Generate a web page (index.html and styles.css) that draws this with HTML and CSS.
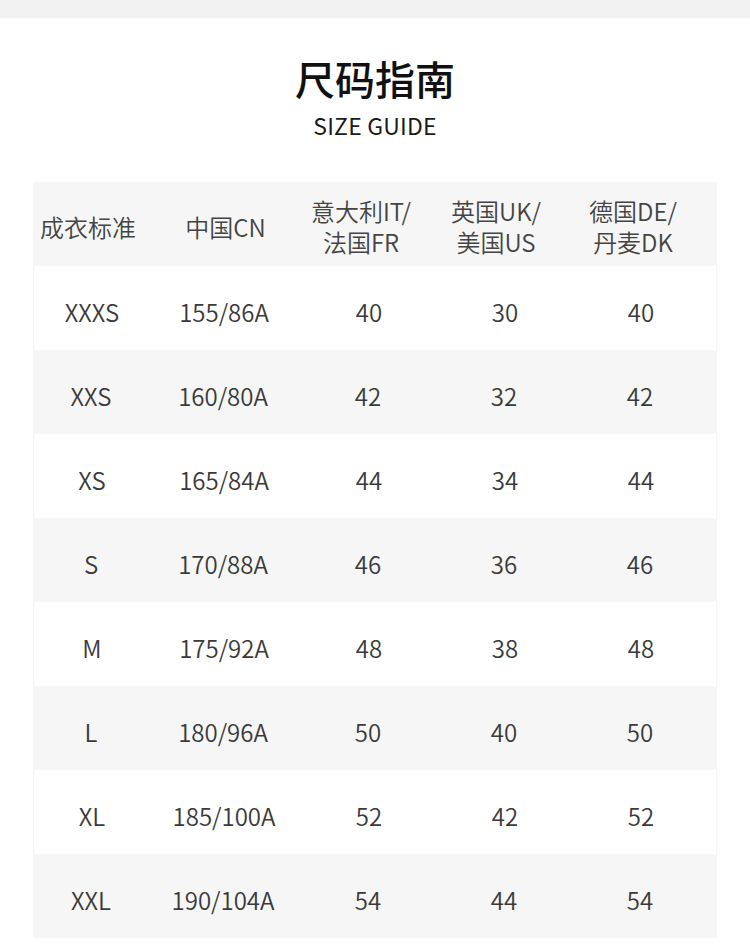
FILE: index.html
```html
<!DOCTYPE html>
<html lang="zh">
<head>
<meta charset="utf-8">
<title>尺码指南</title>
<link rel="stylesheet" href="styles.css">
</head>
<body>
<div class="topbar"></div>
<header class="heading">
  <h1 class="title">尺码指南</h1>
  <p class="subtitle">SIZE GUIDE</p>
</header>
<div class="table">
  <div class="row head">
    <div class="cell">成衣标准</div>
    <div class="cell">中国CN</div>
    <div class="cell">意大利IT/<br>法国FR</div>
    <div class="cell">英国UK/<br>美国US</div>
    <div class="cell">德国DE/<br>丹麦DK</div>
  </div>
  <div class="row"><div class="cell">XXXS</div><div class="cell">155/86A</div><div class="cell">40</div><div class="cell">30</div><div class="cell">40</div></div>
  <div class="row alt"><div class="cell">XXS</div><div class="cell">160/80A</div><div class="cell">42</div><div class="cell">32</div><div class="cell">42</div></div>
  <div class="row"><div class="cell">XS</div><div class="cell">165/84A</div><div class="cell">44</div><div class="cell">34</div><div class="cell">44</div></div>
  <div class="row alt"><div class="cell">S</div><div class="cell">170/88A</div><div class="cell">46</div><div class="cell">36</div><div class="cell">46</div></div>
  <div class="row"><div class="cell">M</div><div class="cell">175/92A</div><div class="cell">48</div><div class="cell">38</div><div class="cell">48</div></div>
  <div class="row alt"><div class="cell">L</div><div class="cell">180/96A</div><div class="cell">50</div><div class="cell">40</div><div class="cell">50</div></div>
  <div class="row"><div class="cell">XL</div><div class="cell">185/100A</div><div class="cell">52</div><div class="cell">42</div><div class="cell">52</div></div>
  <div class="row alt"><div class="cell">XXL</div><div class="cell">190/104A</div><div class="cell">54</div><div class="cell">44</div><div class="cell">54</div></div>
</div>
</body>
</html>
```
FILE: styles.css
```css
* { box-sizing: border-box; }
html, body {
  margin: 0;
  padding: 0;
  background: #ffffff;
  font-family: "Noto Sans CJK SC", "Noto Sans", sans-serif;
  color: #333333;
}
.topbar {
  height: 18px;
  background: #f2f2f2;
}
.heading {
  text-align: center;
  padding-top: 36px;
}
.title {
  margin: 0;
  font-size: 40px;
  line-height: 48px;
  font-weight: 500;
  color: #111111;
}
.subtitle {
  margin: 8px 0 0;
  font-size: 23px;
  line-height: 30px;
  font-weight: 400;
  color: #1a1a1a;
  letter-spacing: 0.2px;
}
.table {
  margin: 42px 33px 0 33px;
  background: #f6f6f6;
}
.row {
  display: grid;
  grid-template-columns: 116px 148px 142px 130px 142px;
  height: 84px;
  padding-right: 6px;
  align-items: center;
  background: #f6f6f6;
}
.row:not(.head):not(.alt) {
  background: #ffffff;
  margin-left: 1px;
  margin-right: 1px;
}
.cell {
  text-align: center;
  font-size: 24px;
  line-height: 31px;
  padding-top: 6px;
  font-weight: 350;
  color: #3a3a3a;
  white-space: nowrap;
}
.head .cell {
  padding-top: 4px;
  color: #444444;
}
.head .cell:nth-child(1) { padding-right: 6px; }
.head .cell:nth-child(2) { padding-left: 5px; }
.head .cell:nth-child(3) { padding-right: 14px; }
.head .cell:nth-child(4) { padding-right: 16px; }
.head .cell:nth-child(5) { padding-right: 14px; }
```
